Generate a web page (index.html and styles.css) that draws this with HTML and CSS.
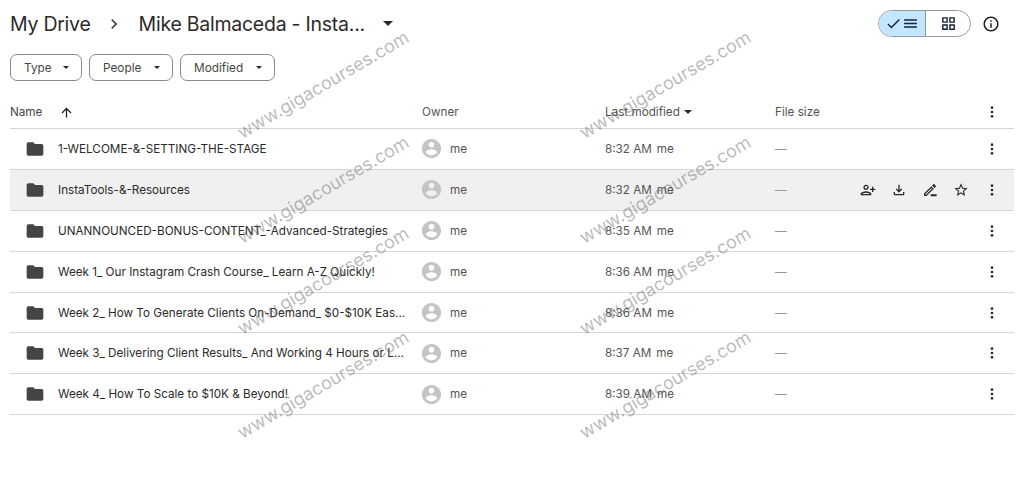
FILE: index.html
```html
<!DOCTYPE html>
<html>
<head>
    <title>My Drive</title>
    <link rel="stylesheet" href="styles.css">
</head>

<body>
    <svg class="icon-defs" width="0" height="0">
        <symbol id="i-folder" viewBox="0 0 24 24"><path d="M10 4H4c-1.1 0-2 .9-2 2v12c0 1.1.9 2 2 2h16c1.1 0 2-.9 2-2V8c0-1.1-.9-2-2-2h-8l-2-2z"/></symbol>
        <symbol id="i-person" viewBox="0 0 24 24"><path d="M12 2C6.48 2 2 6.48 2 12s4.48 10 10 10 10-4.48 10-10S17.52 2 12 2zm0 3c1.66 0 3 1.34 3 3s-1.34 3-3 3-3-1.34-3-3 1.34-3 3-3zm0 14.2c-2.5 0-4.71-1.28-6-3.22.03-1.99 4-3.08 6-3.08 1.99 0 5.97 1.09 6 3.08-1.29 1.94-3.5 3.22-6 3.22z"/></symbol>
        <symbol id="i-more" viewBox="0 0 24 24"><circle cx="12" cy="5.5" r="2"/><circle cx="12" cy="12" r="2"/><circle cx="12" cy="18.5" r="2"/></symbol>
        <symbol id="i-share" viewBox="0 0 24 24"><path transform="matrix(-1 0 0 1 24 0)" d="M15 12c2.21 0 4-1.79 4-4s-1.79-4-4-4-4 1.79-4 4 1.79 4 4 4zm0-6c1.1 0 2 .9 2 2s-.9 2-2 2-2-.9-2-2 .9-2 2-2zm0 8c-2.67 0-8 1.34-8 4v2h16v-2c0-2.66-5.33-4-8-4zm-6 4c.22-.72 3.31-2 6-2 2.7 0 5.8 1.29 6 2H9zm-3-3v-3h3v-2H6V7H4v3H1v2h3v3h2z"/></symbol>
        <symbol id="i-download" viewBox="0 0 24 24"><path d="M18 15v3H6v-3H4v3c0 1.1.9 2 2 2h12c1.1 0 2-.9 2-2v-3h-2zm-1-4l-1.41-1.41L13 12.17V4h-2v8.17L8.41 9.59 7 11l5 5 5-5z"/></symbol>
        <symbol id="i-rename" viewBox="0 0 24 24"><path d="M14.06 9.02l.92.92L5.92 19H5v-.92l9.06-9.06M17.66 3c-.25 0-.51.1-.7.29l-1.83 1.83 3.75 3.75 1.83-1.83c.39-.39.39-1.02 0-1.41l-2.34-2.34c-.2-.2-.45-.29-.71-.29zm-3.6 3.19L3 17.25V21h3.75L17.81 9.94l-3.75-3.75zM13 18.5h9V21.5h-9z"/></symbol>
        <symbol id="i-star" viewBox="0 0 24 24"><path d="M22 9.24l-7.19-.62L12 2 9.19 8.63 2 9.24l5.46 4.73L5.82 21 12 17.27 18.18 21l-1.63-7.03L22 9.24zM12 15.4l-3.76 2.27 1-4.28-3.32-2.88 4.38-.38L12 6.1l1.71 4.04 4.38.38-3.32 2.88 1 4.28L12 15.4z"/></symbol>
    </svg>

    <div class="page">
        <!-- Breadcrumb and view switch -->
        <div class="top-bar">
            <div class="crumbs">
                <span class="crumb">My Drive</span>
                <svg class="crumb-arrow" viewBox="0 0 24 24"><path d="M10 6L8.59 7.41 13.17 12l-4.58 4.59L10 18l6-6z"/></svg>
                <span class="crumb">Mike Balmaceda - Insta...</span>
                <span class="caret crumb-caret"></span>
            </div>
            <div class="top-actions">
                <div class="view-switch">
                    <div class="view-list">
                        <svg class="view-icon" viewBox="0 0 24 24"><path d="M9 16.17L4.83 12l-1.42 1.41L9 19 21 7l-1.41-1.41z"/></svg>
                        <svg class="view-icon" viewBox="0 0 24 24"><path d="M3 18h18v-2H3v2zm0-5h18v-2H3v2zm0-7v2h18V6H3z"/></svg>
                    </div>
                    <div class="view-grid">
                        <svg class="view-icon" viewBox="0 0 24 24"><path d="M3 3v8h8V3H3zm6 6H5V5h4v4zm-6 4v8h8v-8H3zm6 6H5v-4h4v4zm4-16v8h8V3h-8zm6 6h-4V5h4v4zm-6 4v8h8v-8h-8zm6 6h-4v-4h4v4z"/></svg>
                    </div>
                </div>
                <svg class="info-icon" viewBox="0 0 24 24"><path d="M11 7h2v2h-2zm0 4h2v6h-2zm1-9C6.48 2 2 6.48 2 12s4.48 10 10 10 10-4.48 10-10S17.52 2 12 2zm0 18c-4.41 0-8-3.59-8-8s3.59-8 8-8 8 3.59 8 8-3.59 8-8 8z"/></svg>
            </div>
        </div>

        <!-- Filters -->
        <div class="filters">
            <div class="chip chip-type">Type <span class="caret"></span></div>
            <div class="chip chip-people">People <span class="caret"></span></div>
            <div class="chip chip-modified">Modified <span class="caret"></span></div>
        </div>

        <!-- File table -->
        <div class="table">
            <div class="row head">
                <div class="cell-name head-name">Name
                    <svg class="sort-arrow" viewBox="0 0 24 24"><path d="M4 12l1.41 1.41L11 7.83V20h2V7.83l5.58 5.59L20 12l-8-8-8 8z"/></svg>
                </div>
                <div class="cell-owner">Owner</div>
                <div class="cell-date">Last modified <span class="caret head-caret"></span></div>
                <div class="cell-size">File size</div>
                <div class="cell-actions"><svg class="act"><use href="#i-more"/></svg></div>
            </div>

            <div class="row">
                <div class="cell-name"><svg class="folder"><use href="#i-folder"/></svg><span class="name">1-WELCOME-&amp;-SETTING-THE-STAGE</span></div>
                <div class="cell-owner"><svg class="avatar"><use href="#i-person"/></svg>me</div>
                <div class="cell-date">8:32 AM<span class="by">me</span></div>
                <div class="cell-size dash">—</div>
                <div class="cell-actions"><svg class="act"><use href="#i-more"/></svg></div>
            </div>
            <div class="row hovered">
                <div class="cell-name"><svg class="folder"><use href="#i-folder"/></svg><span class="name">InstaTools-&amp;-Resources</span></div>
                <div class="cell-owner"><svg class="avatar"><use href="#i-person"/></svg>me</div>
                <div class="cell-date">8:32 AM<span class="by">me</span></div>
                <div class="cell-size dash">—</div>
                <div class="cell-actions">
                    <svg class="act"><use href="#i-share"/></svg>
                    <svg class="act"><use href="#i-download"/></svg>
                    <svg class="act"><use href="#i-rename"/></svg>
                    <svg class="act"><use href="#i-star"/></svg>
                    <svg class="act"><use href="#i-more"/></svg>
                </div>
            </div>
            <div class="row">
                <div class="cell-name"><svg class="folder"><use href="#i-folder"/></svg><span class="name">UNANNOUNCED-BONUS-CONTENT_-Advanced-Strategies</span></div>
                <div class="cell-owner"><svg class="avatar"><use href="#i-person"/></svg>me</div>
                <div class="cell-date">8:35 AM<span class="by">me</span></div>
                <div class="cell-size dash">—</div>
                <div class="cell-actions"><svg class="act"><use href="#i-more"/></svg></div>
            </div>
            <div class="row">
                <div class="cell-name"><svg class="folder"><use href="#i-folder"/></svg><span class="name">Week 1_ Our Instagram Crash Course_ Learn A-Z Quickly!</span></div>
                <div class="cell-owner"><svg class="avatar"><use href="#i-person"/></svg>me</div>
                <div class="cell-date">8:36 AM<span class="by">me</span></div>
                <div class="cell-size dash">—</div>
                <div class="cell-actions"><svg class="act"><use href="#i-more"/></svg></div>
            </div>
            <div class="row">
                <div class="cell-name"><svg class="folder"><use href="#i-folder"/></svg><span class="name">Week 2_ How To Generate Clients On-Demand_ $0-$10K Eas...</span></div>
                <div class="cell-owner"><svg class="avatar"><use href="#i-person"/></svg>me</div>
                <div class="cell-date">8:36 AM<span class="by">me</span></div>
                <div class="cell-size dash">—</div>
                <div class="cell-actions"><svg class="act"><use href="#i-more"/></svg></div>
            </div>
            <div class="row">
                <div class="cell-name"><svg class="folder"><use href="#i-folder"/></svg><span class="name">Week 3_ Delivering Client Results_ And Working 4 Hours or L...</span></div>
                <div class="cell-owner"><svg class="avatar"><use href="#i-person"/></svg>me</div>
                <div class="cell-date">8:37 AM<span class="by">me</span></div>
                <div class="cell-size dash">—</div>
                <div class="cell-actions"><svg class="act"><use href="#i-more"/></svg></div>
            </div>
            <div class="row">
                <div class="cell-name"><svg class="folder"><use href="#i-folder"/></svg><span class="name">Week 4_ How To Scale to $10K &amp; Beyond!</span></div>
                <div class="cell-owner"><svg class="avatar"><use href="#i-person"/></svg>me</div>
                <div class="cell-date">8:39 AM<span class="by">me</span></div>
                <div class="cell-size dash">—</div>
                <div class="cell-actions"><svg class="act"><use href="#i-more"/></svg></div>
            </div>
        </div>
    </div>

    <!-- Watermarks lie over everything -->
    <div class="mark mark-l1">www.gigacourses.com</div>
    <div class="mark mark-l2">www.gigacourses.com</div>
    <div class="mark mark-l3">www.gigacourses.com</div>
    <div class="mark mark-l4">www.gigacourses.com</div>
    <div class="mark mark-r1">www.gigacourses.com</div>
    <div class="mark mark-r2">www.gigacourses.com</div>
    <div class="mark mark-r3">www.gigacourses.com</div>
    <div class="mark mark-r4">www.gigacourses.com</div>
</body>

</html>
```

FILE: styles.css
```css
html, body {
    margin: 0;
    padding: 0;
    height: 492px;
    overflow: hidden;
    background: #fff;
}
body {
    position: relative;
    font-family: "Inter", "Liberation Sans", sans-serif;
    color: #1f1f1f;
}
.icon-defs {
    display: block;
    height: 0;
}
.page {
    padding: 0 10px;
}
.top-bar {
    height: 47px;
    display: flex;
    align-items: center;
    justify-content: space-between;
}
.crumbs {
    display: flex;
    align-items: center;
}
.crumb {
    font-size: 19.5px;
    letter-spacing: -0.25px;
    color: #2a2a2a;
}
.crumb-arrow {
    width: 20px;
    height: 20px;
    margin: 0 15px 0 13px;
    fill: #444746;
}
.caret {
    display: inline-block;
    width: 0;
    height: 0;
    border-left: 3px solid transparent;
    border-right: 3px solid transparent;
    border-top: 3px solid #2a2a2a;
}
.crumb-caret {
    margin-left: 18px;
    border-left-width: 5px;
    border-right-width: 5px;
    border-top-width: 5px;
}
.top-actions {
    display: flex;
    align-items: center;
    gap: 11px;
    padding-right: 14px;
}
.view-switch {
    display: flex;
    width: 93px;
    height: 27px;
    box-sizing: border-box;
    border: 1px solid #9a9a9a;
    border-radius: 14px;
    overflow: hidden;
}
.view-list {
    width: 46px;
    background: #c2e7ff;
    border-right: 1px solid #8a9aa5;
    display: flex;
    align-items: center;
    justify-content: center;
    gap: 0;
}
.view-grid {
    flex: 1;
    display: flex;
    align-items: center;
    justify-content: center;
}
.view-icon {
    width: 17px;
    height: 17px;
    fill: #13233a;
}
.info-icon {
    width: 18px;
    height: 18px;
    fill: #1f1f1f;
}
.filters {
    display: flex;
    gap: 7px;
    margin-top: 7px;
}
.chip {
    height: 27px;
    box-sizing: border-box;
    border: 1px solid #8a8a8a;
    border-radius: 7px;
    display: flex;
    align-items: center;
    justify-content: space-between;
    padding: 0 12px 0 13px;
    font-size: 11.8px;
    color: #444746;
}
.chip-type { width: 72px; }
.chip-people { width: 84px; }
.chip-modified { width: 95px; }

.table {
    margin-top: 15px;
}
.row {
    display: grid;
    grid-template-columns: 412px 183px 170px 1fr auto;
    align-items: center;
    height: 40.9px;
    box-sizing: border-box;
    border-bottom: 1px solid #d6d6d6;
    font-size: 11.7px;
    color: #555;
}
.row.head {
    height: 33px;
}
.row.hovered {
    background: #f0f0f0;
}
.cell-name {
    display: flex;
    align-items: center;
    min-width: 0;
    color: #2a2a2a;
}
.head-name {
    color: #444746;
}
.sort-arrow {
    width: 15px;
    height: 15px;
    margin-left: 17px;
    fill: #1f1f1f;
}
.folder {
    width: 20px;
    height: 20px;
    margin-left: 15px;
    margin-right: 13px;
    fill: #444444;
}
.name {
    white-space: nowrap;
}
.cell-owner, .cell-date {
    display: flex;
    align-items: center;
}
.avatar {
    width: 23px;
    height: 23px;
    margin-left: -2px;
    margin-right: 7px;
    fill: #c4c4c4;
}
.by {
    margin-left: 5px;
}
.head-caret {
    margin-left: 4px;
    border-left-width: 4px;
    border-right-width: 4px;
    border-top-width: 4px;
}
.dash {
    color: #999;
}
.cell-actions {
    display: flex;
    align-items: center;
    gap: 15px;
    padding-right: 14px;
}
.act {
    width: 16px;
    height: 16px;
    fill: #2a2a2a;
}

.mark {
    position: absolute;
    width: 200px;
    text-align: center;
    font-size: 18px;
    color: rgba(90, 90, 90, 0.42);
    white-space: nowrap;
    transform: rotate(-30.3deg);
    pointer-events: none;
}
.mark-l1 { left: 223px; top: 74px; }
.mark-l2 { left: 223px; top: 179px; }
.mark-l3 { left: 223px; top: 270px; }
.mark-l4 { left: 223px; top: 374px; }
.mark-r1 { left: 565px; top: 74px; }
.mark-r2 { left: 565px; top: 179px; }
.mark-r3 { left: 565px; top: 270px; }
.mark-r4 { left: 565px; top: 374px; }
```
